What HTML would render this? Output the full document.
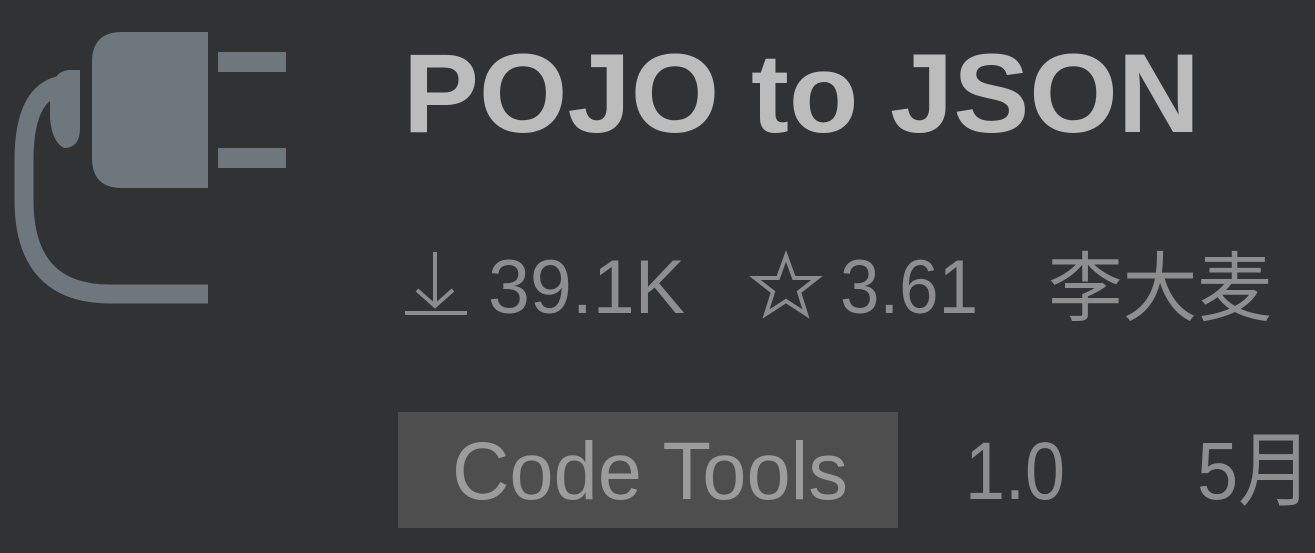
<!DOCTYPE html>
<html><head><meta charset="utf-8"><style>
html,body{margin:0;padding:0;background:#313234;width:1315px;height:553px;overflow:hidden}
</style></head><body>
<svg width="1315" height="553" viewBox="0 0 1315 553" xmlns="http://www.w3.org/2000/svg">
<rect width="1315" height="553" fill="#313234"/>
<g fill="#6e767e">
<path d="M122,32 H208 V188 H122 Q92,188 92,158 V62 Q92,32 122,32 Z"/>
<rect x="218" y="52" width="68" height="20"/>
<rect x="218" y="148" width="68" height="20"/>
<path d="M80,70 V128 Q80,148 64,148 Q52,142 50,118 V96 Q52,72 68,70 Z"/>
</g>
<path d="M62,85 C36,90 24,115 24,160 L24,200 Q24,294 110,294 L208,294" fill="none" stroke="#6e767e" stroke-width="19"/>
<text x="403" y="132" font-family="Liberation Sans, sans-serif" font-weight="bold" font-size="112" fill="#bcbcbc" textLength="797" lengthAdjust="spacingAndGlyphs">POJO to JSON</text>
<g stroke="#8c8c8c" stroke-width="4" fill="none">
<path d="M435,252 V306 M417,290 L435,306 L453,290"/>
<path d="M405,313 H467"/>
<path d="M786,256 L794,278 L817,278 L799,292 L806,314 L786,301 L766,314 L773,292 L755,278 L778,278 Z" stroke-linejoin="miter"/>
</g>
<g font-family="Liberation Sans, 'Noto Sans CJK SC', sans-serif" font-size="76" fill="#8e8e8e">
<text x="488" y="313" textLength="197" lengthAdjust="spacingAndGlyphs">39.1K</text>
<text x="840" y="313" textLength="138" lengthAdjust="spacingAndGlyphs">3.61</text>
<text x="1048" y="315" textLength="224" lengthAdjust="spacingAndGlyphs">李大麦</text>
</g>
<rect x="398" y="412" width="500" height="116" fill="#4e4e4e"/>
<g font-family="Liberation Sans, 'Noto Sans CJK SC', sans-serif" font-size="82" fill="#9c9c9c">
<text x="452" y="499" textLength="396" lengthAdjust="spacingAndGlyphs">Code Tools</text>
<text x="965" y="499" textLength="100" lengthAdjust="spacingAndGlyphs" fill="#8e8e8e">1.0</text>
<text x="1197" y="499" textLength="115" lengthAdjust="spacingAndGlyphs" fill="#8e8e8e">5月</text>
</g>
</svg>
</body></html>
